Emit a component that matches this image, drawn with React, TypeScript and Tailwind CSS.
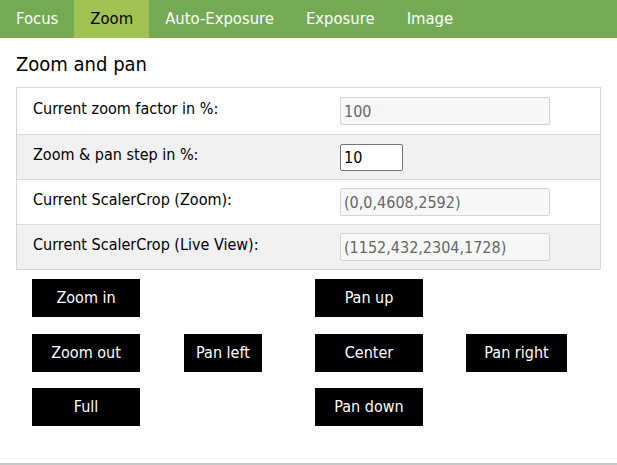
import React from 'react';

const tabs = ['Focus', 'Zoom', 'Auto-Exposure', 'Exposure', 'Image'];

const rows = [
  { label: 'Current zoom factor in %:', value: '100', readOnly: true },
  { label: 'Zoom & pan step in %:', value: '10', readOnly: false },
  { label: 'Current ScalerCrop (Zoom):', value: '(0,0,4608,2592)', readOnly: true },
  { label: 'Current ScalerCrop (Live View):', value: '(1152,432,2304,1728)', readOnly: true },
];

const Btn: React.FC<{ label: string; w: string }> = ({ label, w }) => (
  <button className={`${w} h-[38px] bg-black text-white text-[16px]`}>{label}</button>
);

export default function App() {
  return (
    <div className="min-h-[465px] bg-white font-['DejaVu_Sans_Condensed','DejaVu_Sans',sans-serif] text-black flex flex-col">
      {/* Tabs */}
      <nav className="flex h-[38px] bg-[#75aa55]">
        {tabs.map(t => (
          <a
            key={t}
            href="#"
            className={`px-4 flex items-center text-[16.5px] ${t === 'Zoom' ? 'bg-[#a1c153] text-black' : 'text-white'}`}
          >
            {t}
          </a>
        ))}
      </nav>

      <main className="flex-1 px-4">
        <h2 className="text-[20px] mt-[13px] mb-[10px] leading-[26px]">Zoom and pan</h2>

        <div className="border border-[#d6d6d6]">
          {rows.map((r, i) => (
            <div
              key={r.label}
              className={`flex items-center ${i === 0 ? 'h-[46px]' : 'h-[45px]'} text-[16px] ${i % 2 ? 'bg-[#f1f1f1]' : 'bg-white'} ${i > 0 ? 'border-t border-[#dcdcdc]' : ''}`}
            >
              <div className="w-[323px] pl-4 -mt-1">{r.label}</div>
              {r.readOnly ? (
                <input
                  readOnly
                  value={r.value}
                  className="w-[210px] h-[28px] px-[3px] bg-[#f7f7f7] border border-[#d4d4d4] rounded-[2px] text-[#666] text-[16px]"
                />
              ) : (
                <input
                  defaultValue={r.value}
                  className="w-[63px] h-[27px] px-[3px] bg-white border border-[#767676] rounded-[2px] text-black text-[16px]"
                />
              )}
            </div>
          ))}
        </div>

        {/* Buttons */}
        <div className="grid grid-cols-[152px_131px_151px_auto] gap-y-[16.5px] pl-4 pt-[9px]">
          <Btn label="Zoom in" w="w-[108px]" />
          <div />
          <Btn label="Pan up" w="w-[108px]" />
          <div />
          <Btn label="Zoom out" w="w-[108px]" />
          <Btn label="Pan left" w="w-[78px]" />
          <Btn label="Center" w="w-[108px]" />
          <Btn label="Pan right" w="w-[101px]" />
          <Btn label="Full" w="w-[108px]" />
          <div />
          <Btn label="Pan down" w="w-[108px]" />
          <div />
        </div>
      </main>

      <div className="h-[2px] bg-[#c8c8c8]" />
    </div>
  );
}
